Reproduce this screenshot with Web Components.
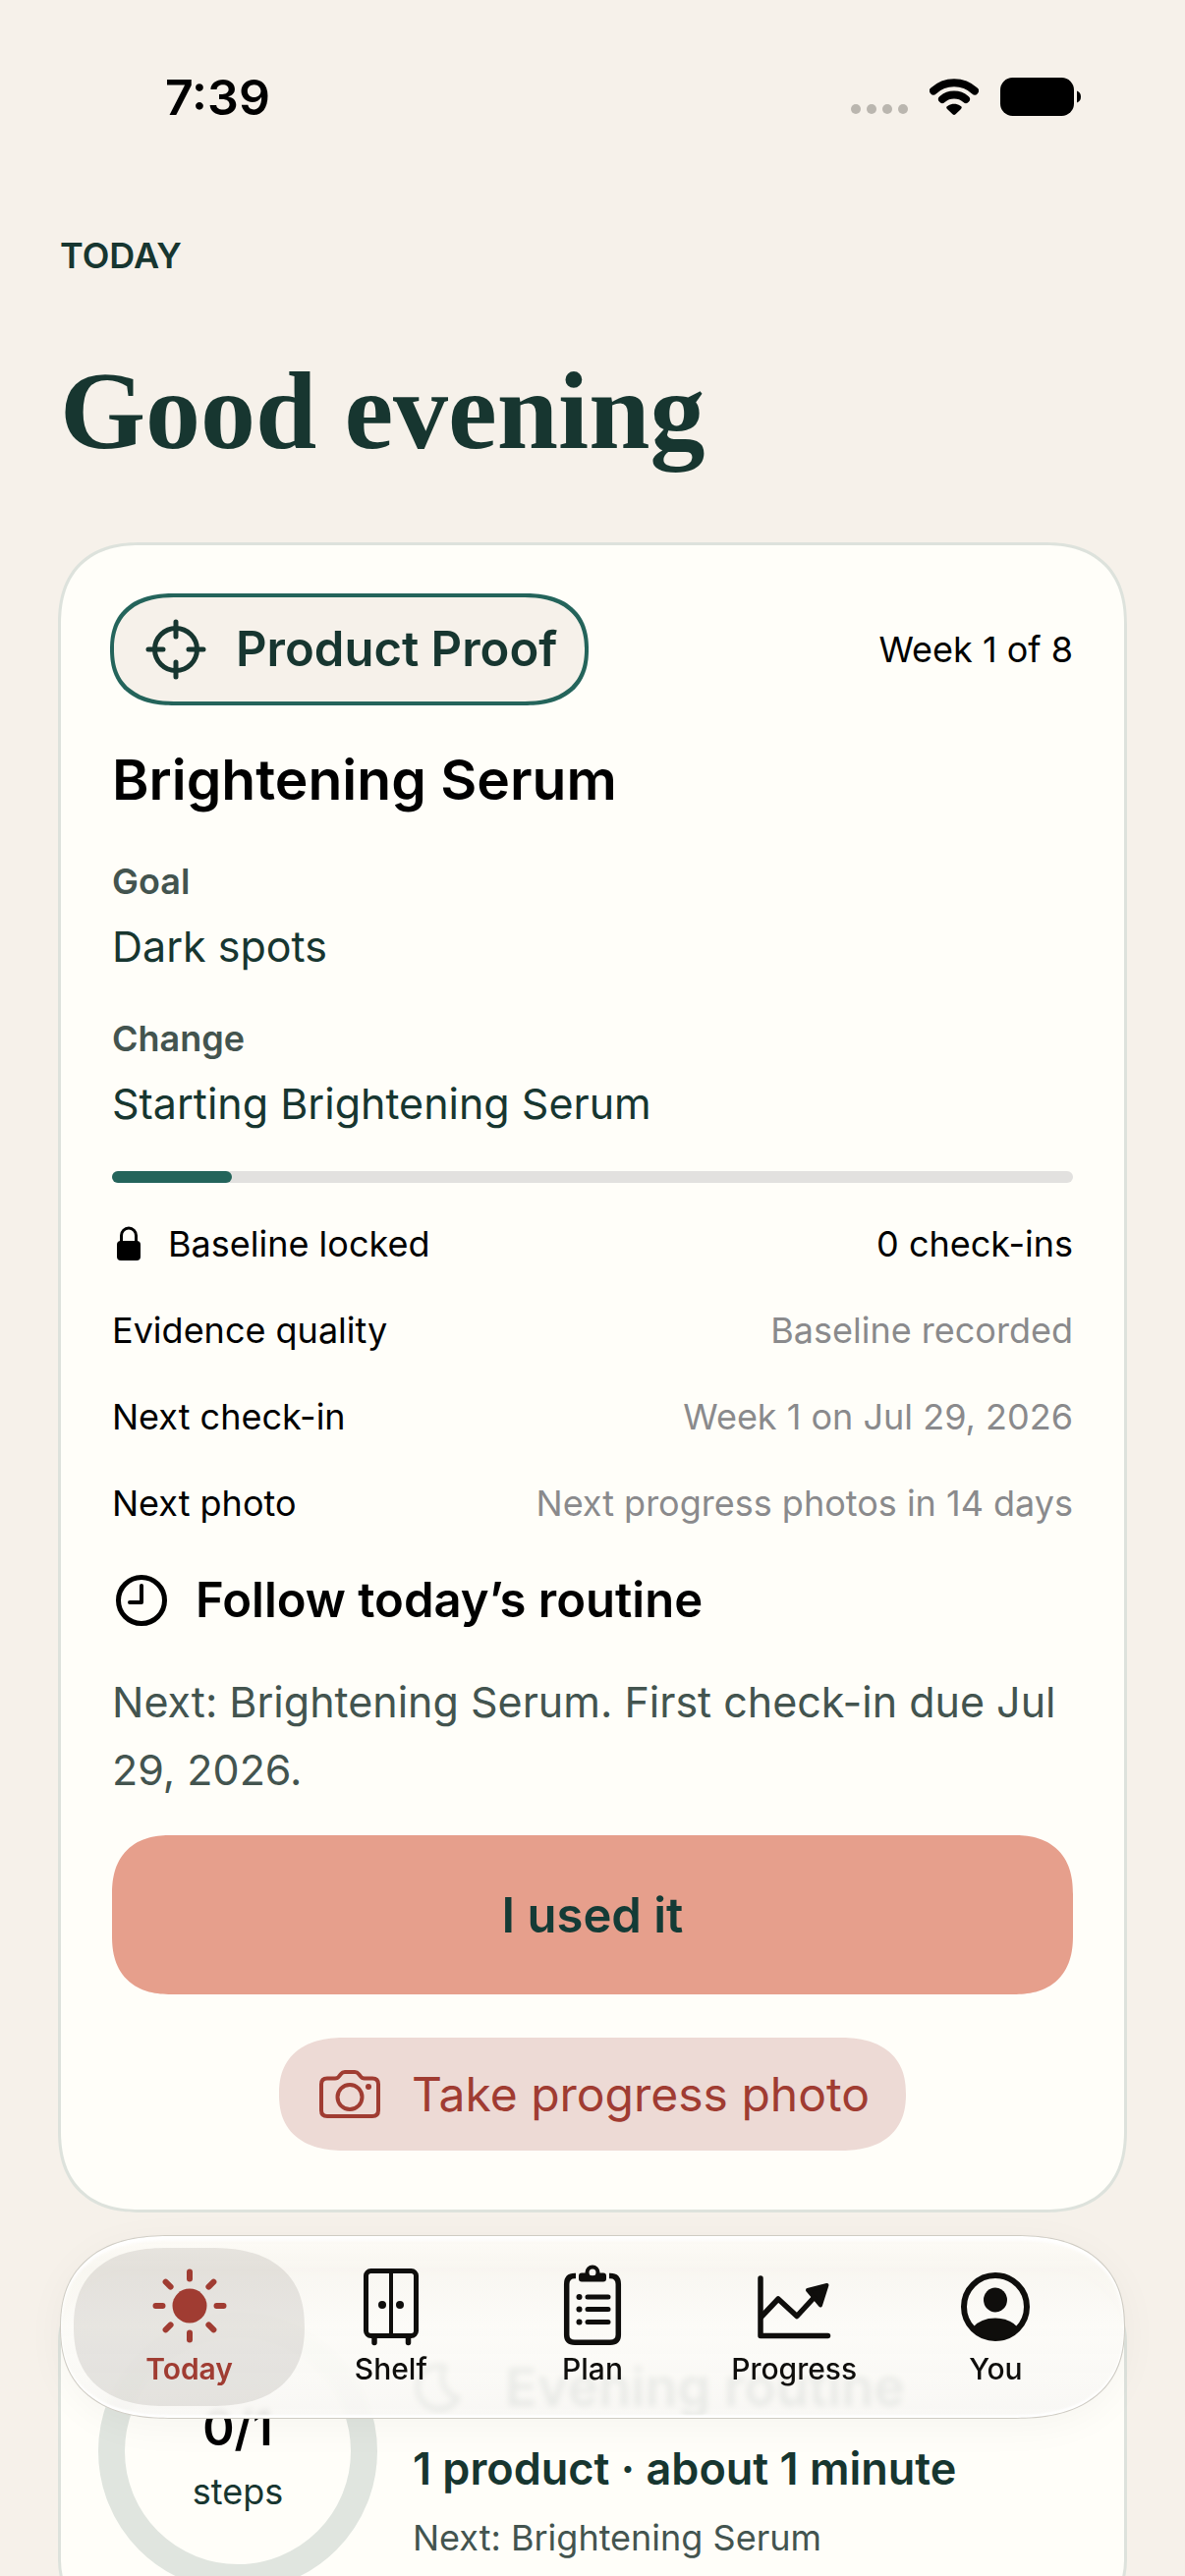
<!DOCTYPE html>
<html lang="en">
<head>
<meta charset="utf-8">
<meta name="viewport" content="width=device-width, initial-scale=1">
<title>Today</title>
<style>
    :root {
        --paper: #f6f1ea;
        --card: #fffef9;
        --line: #dde2dc;
        --ink: #173630;
        --ink-soft: #43544f;
        --teal: #24645b;
        --brick: #a03c32;
    }

    body {
        margin: 0;
        height: 100vh;
        background: var(--paper);
        color: #000;
        font-family: Inter, "Liberation Sans", sans-serif;
    }
</style>
</head>
<body>
<today-screen>
    <status-bar slot="status">7:39</status-bar>
    <screen-header label="Today">Good evening</screen-header>

    <proof-card week="Week 1 of 8" product="Brightening Serum">
        <detail-item slot="details" label="Goal">Dark spots</detail-item>
        <detail-item slot="details" label="Change">Starting Brightening Serum</detail-item>
        <fact-row slot="facts" label="Baseline locked" icon="lock" strong>0 check-ins</fact-row>
        <fact-row slot="facts" label="Evidence quality">Baseline recorded</fact-row>
        <fact-row slot="facts" label="Next check-in">Week 1 on Jul 29, 2026</fact-row>
        <fact-row slot="facts" label="Next photo">Next progress photos in 14 days</fact-row>
        Next: Brightening Serum. First check-in due Jul 29, 2026.
    </proof-card>

    <routine-card></routine-card>

    <tab-bar slot="tabs">
        <tab-item icon="sun" href="#today" selected>Today</tab-item>
        <tab-item icon="shelf" href="#shelf">Shelf</tab-item>
        <tab-item icon="plan" href="#plan">Plan</tab-item>
        <tab-item icon="chart" href="#progress">Progress</tab-item>
        <tab-item icon="person" href="#you">You</tab-item>
    </tab-bar>
</today-screen>

<script>
/* Every icon: its view box size and its shapes, drawn in currentColor */
const ICONS = {
    signal: { w: 58, h: 10, body: `
        <g fill="currentColor"><circle cx="5" cy="5" r="5"/><circle cx="21" cy="5" r="5"/><circle cx="37" cy="5" r="5"/><circle cx="53" cy="5" r="5"/></g>` },
    wifi: { w: 50, h: 38, body: `
        <g fill="none" stroke="currentColor" stroke-width="8" stroke-linecap="round">
            <path d="M4 12.500A31 31 0 0 1 46 12.500"/>
            <path d="M13 21A18.500 18.500 0 0 1 37 21"/>
        </g>
        <path fill="currentColor" d="M18.500 31.500C16.500 29.500 17 28.500 19 27.500C22.500 25.200 27.500 25.200 31 27.500C33 28.500 33.500 29.500 31.500 31.500L26.500 36.300Q25 37.600 23.500 36.300Z"/>` },
    battery: { w: 82, h: 40, body: `
        <rect width="75" height="39" rx="12.500" fill="currentColor"/>
        <path d="M78 13.500Q82 15 82 19.500T78 25.500Z" fill="currentColor"/>` },
    target: { w: 62, h: 62, body: `
        <g fill="none" stroke="currentColor" stroke-width="5" stroke-linecap="round">
            <circle cx="31" cy="31" r="21.500"/>
            <path d="M31 3V18M31 44V59M3 31H18M44 31H59"/>
        </g>` },
    lock: { w: 24, h: 36, body: `
        <path d="M4.500 17V9.500a7.500 7.500 0 0 1 15 0V17" fill="none" stroke="currentColor" stroke-width="3"/>
        <rect y="15" width="24" height="20" rx="4" fill="currentColor"/>` },
    clock: { w: 54, h: 54, body: `
        <g fill="none" stroke="currentColor" stroke-linecap="round" stroke-linejoin="round">
            <circle cx="27" cy="27" r="23.500" stroke-width="5"/>
            <path d="M27 12V29H15" stroke-width="4"/>
        </g>` },
    camera: { w: 62, h: 50, body: `
        <g fill="none" stroke="currentColor" stroke-width="4" stroke-linejoin="round">
            <path d="M8 8.500h8c2 0 3-.5 4-2l2-2.500q1.500-2 4-2h10q2.500 0 4 2l2 2.500c1 1.500 2 2 4 2h8q6 0 6 6V41q0 6-6 6H8q-6 0-6-6V14.500q0-6 6-6Z"/>
            <circle cx="31" cy="27.500" r="12.500"/>
        </g>
        <circle cx="50" cy="17" r="3" fill="currentColor"/>` },
    sun: { w: 84, h: 84, body: `
        <circle cx="42" cy="42" r="17.500" fill="currentColor"/>
        <path d="M42 7.500V14.500M42 69.500V76.500M7.500 42H14.500M69.500 42H76.500M17.600 17.600L22.600 22.600M61.400 61.400L66.400 66.400M17.600 66.400L22.600 61.400M61.400 22.600L66.400 17.600" stroke="currentColor" stroke-width="6" stroke-linecap="round"/>` },
    shelf: { w: 84, h: 84, body: `
        <g fill="none" stroke="currentColor">
            <rect x="16.500" y="6.500" width="51" height="66" rx="5" stroke-width="5"/>
            <path d="M42 7V72" stroke-width="4"/>
            <path d="M25 74V79.500M59.500 74V79.500" stroke-width="5.500" stroke-linecap="round"/>
        </g>
        <circle cx="33" cy="41" r="4" fill="currentColor"/><circle cx="51" cy="41" r="4" fill="currentColor"/>` },
    plan: { w: 84, h: 84, body: `
        <g fill="none" stroke="currentColor" stroke-width="5.500">
            <path d="M25 11.500H24Q15.700 11.500 15.700 20V71.500Q15.700 79.200 24 79.200H60Q68.300 79.200 68.300 71.500V20Q68.300 11.500 60 11.500H59"/>
            <path d="M37 33H58M37 45.500H58M37 58.500H58" stroke-width="5" stroke-linecap="round"/>
            <circle cx="42" cy="8" r="5.500" stroke-width="4"/>
        </g>
        <path fill="currentColor" d="M31 8.500h5q6 6 12 0h5q3 0 3 3v3q0 3-3 3H31q-3 0-3-3v-3q0-3 3-3Z"/>
        <circle cx="28.500" cy="33" r="3" fill="currentColor"/><circle cx="28.500" cy="45.500" r="3" fill="currentColor"/><circle cx="28.500" cy="58.500" r="3" fill="currentColor"/>` },
    chart: { w: 84, h: 84, body: `
        <g fill="none" stroke="currentColor" stroke-width="5.500" stroke-linecap="round" stroke-linejoin="round">
            <path d="M8 14V72.500H76.500"/>
            <path d="M9 53L26 35L45 52.500L63 33"/>
        </g>
        <path d="M75.500 21L56 26L69 41.500Z" fill="currentColor" stroke="currentColor" stroke-width="4" stroke-linejoin="round"/>` },
    person: { w: 84, h: 84, body: `
        <circle cx="42" cy="43" r="32" fill="none" stroke="currentColor" stroke-width="6"/>
        <ellipse cx="42" cy="36" rx="12" ry="12.500" fill="currentColor"/>
        <path d="M19 64Q27 54.500 42 54.500T65 64Q56 75.500 42 75.500T19 64Z" fill="currentColor"/>` },
    moon: { w: 54, h: 54, body: `
        <path d="M33 6A22 22 0 1 0 46 38A22 22 0 0 1 33 6Z" fill="none" stroke="currentColor" stroke-width="5" stroke-linejoin="round"/>` }
};

function icon(name) {
    const { w, h, body } = ICONS[name];
    return `<svg width="${w}" height="${h}" viewBox="0 0 ${w} ${h}" aria-hidden="true">${body}</svg>`;
}

/* Base for all elements: fills an open shadow root from styles() and markup() */
class BaseElement extends HTMLElement {
    constructor() {
        super();
        this.attachShadow({ mode: "open" });
    }

    connectedCallback() {
        this.shadowRoot.innerHTML = `
            <style>
                *, ::before { box-sizing: border-box; }
                h1, h2, h3, p { margin: 0; }
                svg { display: block; flex: none; }
                ${this.styles()}
            </style>
            ${this.markup()}`;
    }

    attr(name) {
        return this.getAttribute(name) || "";
    }
}

/* Screen frame: scrolling content with the tab bar floating over it */
class TodayScreen extends BaseElement {
    styles() {
        return `
            :host { display: block; position: relative; height: 100%; overflow: hidden; }
            .scroller { height: 100%; overflow-y: auto; scrollbar-width: none; }
            main { display: flex; flex-direction: column; gap: 60px; padding: 52px 59px 400px; }
            .tabs { position: absolute; left: 61px; right: 61px; bottom: 160px; }`;
    }

    markup() {
        return `
            <div class="scroller">
                <slot name="status"></slot>
                <main><slot></slot></main>
            </div>
            <div class="tabs"><slot name="tabs"></slot></div>`;
    }
}
customElements.define("today-screen", TodayScreen);

class StatusBar extends BaseElement {
    styles() {
        return `
            :host {
                display: flex;
                justify-content: space-between;
                align-items: center;
                height: 186px;
                padding: 12px 106px 0 168px;
                box-sizing: border-box;
                font-size: 50px;
                font-weight: 600;
                line-height: 60px;
            }
            .icons { display: flex; align-items: center; gap: 22px; }
            .signal { align-self: flex-end; padding-bottom: 3px; color: #bab6af; }`;
    }

    markup() {
        return `
            <time><slot></slot></time>
            <div class="icons">
                <span class="signal">${icon("signal")}</span>
                ${icon("wifi")}
                ${icon("battery")}
            </div>`;
    }
}
customElements.define("status-bar", StatusBar);

class ScreenHeader extends BaseElement {
    styles() {
        return `
            :host { display: flex; flex-direction: column; gap: 74px; padding: 0 2px 12px; color: var(--ink); }
            p { font-size: 36px; font-weight: 600; line-height: 44px; text-transform: uppercase; }
            h1 { font: bold 112px/124px "Liberation Serif", serif; }`;
    }

    markup() {
        return `<p>${this.attr("label")}</p><h1><slot></slot></h1>`;
    }
}
customElements.define("screen-header", ScreenHeader);

/* Small label with its value underneath */
class DetailItem extends BaseElement {
    styles() {
        return `
            :host { display: flex; flex-direction: column; gap: 12px; }
            h3 { font-size: 36px; font-weight: 600; line-height: 50px; color: var(--ink-soft); }
            p { font-size: 43px; line-height: 58px; color: var(--ink); }`;
    }

    markup() {
        return `<h3>${this.attr("label")}</h3><p><slot></slot></p>`;
    }
}
customElements.define("detail-item", DetailItem);

/* One line of the fact list: label on the left, value on the right */
class FactRow extends BaseElement {
    styles() {
        return `
            :host { display: flex; justify-content: space-between; font-size: 36px; line-height: 44px; }
            .label { display: flex; align-items: center; gap: 28px; }
            .label svg { margin-left: 5px; }
            .value { color: #8a8a8c; }
            :host([strong]) .value { color: #000; }`;
    }

    markup() {
        const mark = this.hasAttribute("icon") ? icon(this.attr("icon")) : "";
        return `
            <span class="label">${mark}${this.attr("label")}</span>
            <span class="value"><slot></slot></span>`;
    }
}
customElements.define("fact-row", FactRow);

class ProofCard extends BaseElement {
    styles() {
        return `
            :host {
                display: flex;
                flex-direction: column;
                gap: 40px;
                padding: 51px 52px 60px;
                border: 3px solid var(--line);
                border-radius: 72px;
                background: var(--card);
            }
            header { display: flex; justify-content: space-between; align-items: center; font-size: 36px; line-height: 44px; }
            .badge {
                display: flex;
                align-items: center;
                gap: 30px;
                height: 110px;
                padding: 0 28px 0 32px;
                border: 2px solid var(--teal);
                border-radius: 56px;
                box-shadow: 0 0 0 2px var(--teal);
                background: var(--paper);
                color: var(--ink);
                font-size: 49px;
                font-weight: 600;
            }
            h2 { font-size: 57px; font-weight: 600; line-height: 76px; }
            progress { display: block; width: 100%; height: 12px; border: 0; appearance: none; }
            progress::-webkit-progress-bar { border-radius: 6px; background: #e2e1df; }
            progress::-webkit-progress-value { border-radius: 6px; background: var(--teal); }
            .facts { display: flex; flex-direction: column; gap: 44px; }
            .next { display: flex; flex-direction: column; gap: 32px; }
            h3 { display: flex; align-items: center; gap: 28px; padding-left: 3px; font-size: 49px; font-weight: 600; line-height: 74px; }
            .next p { font-size: 43px; line-height: 69px; color: var(--ink-soft); }
            button { border: 0; font: inherit; }
            .used { height: 162px; border-radius: 48px; background: #e69f8c; color: #143b36; font-size: 49px; font-weight: 600; }
            .photo {
                display: flex;
                align-items: center;
                align-self: center;
                gap: 32px;
                height: 115px;
                margin-top: 12px;
                padding: 0 37px 0 41px;
                border-radius: 58px;
                background: #eddad5;
                color: var(--brick);
                font-size: 48px;
            }
            /* smoother corners where the browser can draw them */
            @supports (corner-shape: superellipse(1.25)) {
                :host, .badge, .used, .photo { corner-shape: superellipse(1.25); }
                :host { border-radius: 84px; }
                .badge, .photo { border-radius: 68px / 58px; }
                .used { border-radius: 60px; }
            }`;
    }

    markup() {
        return `
            <header>
                <span class="badge">${icon("target")}Product Proof</span>
                <span>${this.attr("week")}</span>
            </header>
            <h2>${this.attr("product")}</h2>
            <slot name="details"></slot>
            <progress max="8" value="1" aria-label="${this.attr("week")}"></progress>
            <div class="facts"><slot name="facts"></slot></div>
            <div class="next">
                <h3>${icon("clock")}Follow today’s routine</h3>
                <p><slot></slot></p>
                <button class="used" type="button">I used it</button>
                <button class="photo" type="button">${icon("camera")}Take progress photo</button>
            </div>`;
    }
}
customElements.define("proof-card", ProofCard);

/* Routine summary with the step ring, partly under the tab bar */
class RoutineCard extends BaseElement {
    styles() {
        return `
            :host {
                display: flex;
                align-items: center;
                gap: 36px;
                padding: 38px;
                border: 3px solid var(--line);
                border-radius: 72px;
                background: var(--card);
            }
            .ring {
                display: flex;
                flex: none;
                flex-direction: column;
                align-items: center;
                justify-content: center;
                gap: 6px;
                width: 284px;
                height: 284px;
                padding-top: 12px;
                border: 27px solid #e0e5df;
                border-radius: 50%;
                color: var(--ink);
                font-size: 36px;
                line-height: 52px;
            }
            .ring b { color: #000; font-size: 49px; font-weight: 600; line-height: 64px; }
            .text { display: flex; flex-direction: column; padding-top: 24px; color: var(--ink); }
            h2 { display: flex; align-items: center; gap: 40px; margin-bottom: 14px; font-size: 54px; font-weight: 600; line-height: 69px; }
            .amount { font-size: 45px; font-weight: 600; line-height: 69px; }
            .next { font-size: 36px; line-height: 72px; color: var(--ink-soft); }`;
    }

    markup() {
        return `
            <div class="ring"><b>0/1</b>steps</div>
            <div class="text">
                <h2>${icon("moon")}Evening routine</h2>
                <p class="amount">1 product · about 1 minute</p>
                <p class="next">Next: Brightening Serum</p>
            </div>`;
    }
}
customElements.define("routine-card", RoutineCard);

class TabBar extends BaseElement {
    styles() {
        return `
            :host { display: block; }
            nav {
                display: grid;
                grid-template-columns: repeat(5, 1fr);
                height: 187px;
                padding: 12px 28px;
                border: 1px solid #cfccc4;
                border-radius: 94px;
                background: linear-gradient(rgba(253, 251, 247, .95), rgba(248, 246, 241, .94) 18%, rgba(252, 251, 247, .94) 50%, rgba(248, 247, 244, .92));
                backdrop-filter: blur(3px);
                box-shadow: inset 0 4px 3px #fff, inset 0 -3px 2px #fff, 0 8px 40px rgba(0, 0, 0, .04);
            }
            @supports (corner-shape: superellipse(1.25)) {
                nav { border-radius: 112px / 94px; corner-shape: superellipse(1.25); }
            }`;
    }

    markup() {
        return `<nav aria-label="Main"><slot></slot></nav>`;
    }
}
customElements.define("tab-bar", TabBar);

class TabItem extends BaseElement {
    styles() {
        return `
            :host { display: block; position: relative; color: #0f0e0c; }
            :host([selected]) { color: var(--brick); }
            /* the selected capsule is wider than its column */
            :host([selected])::before {
                content: "";
                position: absolute;
                inset: 0 -15px;
                border-radius: 81px;
                background: rgba(70, 66, 56, .12);
            }
            @supports (corner-shape: superellipse(1.25)) {
                :host([selected])::before { border-radius: 96px / 81px; corner-shape: superellipse(1.25); }
            }
            a {
                display: flex;
                position: relative;
                flex-direction: column;
                align-items: center;
                gap: 2px;
                padding-top: 17px;
                color: inherit;
                font-size: 30px;
                font-weight: 500;
                line-height: 40px;
                text-decoration: none;
            }
            :host([selected]) a { font-weight: 600; }`;
    }

    markup() {
        return `<a href="${this.attr("href")}">${icon(this.attr("icon"))}<span><slot></slot></span></a>`;
    }
}
customElements.define("tab-item", TabItem);
</script>
</body>
</html>
